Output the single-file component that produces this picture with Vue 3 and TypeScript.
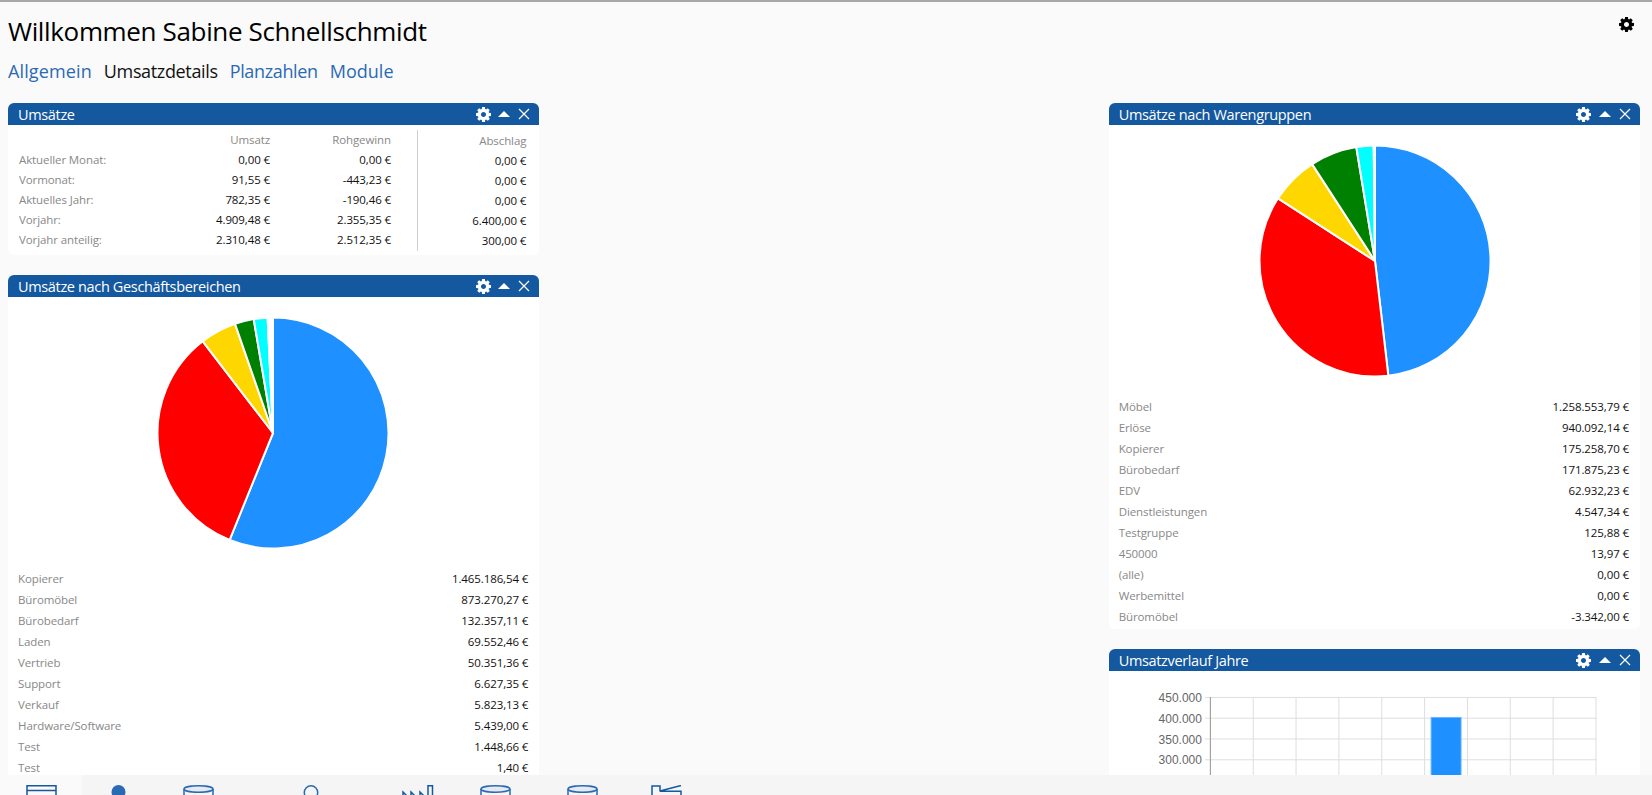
<script setup lang="ts">
interface Row { label: string; value: string }
const COLORS = ['#1e90ff', '#ff0000', '#ffd700', '#008000', '#00ffff']
const R = 115.5

function num(v: string): number {
  return parseFloat(v.replace(/[^\d,-]/g, '').replace(',', '.'))
}
function slices(rows: Row[]) {
  const vals = rows.map(r => Math.max(0, num(r.value)))
  const total = vals.reduce((a, b) => a + b, 0)
  let a = 0
  return vals.map((v, i) => {
    const from = a
    a += (v / total) * Math.PI * 2
    const large = a - from > Math.PI ? 1 : 0
    const p = (t: number) => `${(R * Math.sin(t)).toFixed(2)} ${(-R * Math.cos(t)).toFixed(2)}`
    return { d: `M0 0L${p(from)}A${R} ${R} 0 ${large} 1 ${p(a)}Z`, color: COLORS[i] ?? '#ffffff' }
  })
}
const bereiche: Row[] = [
  { label: 'Kopierer', value: '1.465.186,54 €' },
  { label: 'Büromöbel', value: '873.270,27 €' },
  { label: 'Bürobedarf', value: '132.357,11 €' },
  { label: 'Laden', value: '69.552,46 €' },
  { label: 'Vertrieb', value: '50.351,36 €' },
  { label: 'Support', value: '6.627,35 €' },
  { label: 'Verkauf', value: '5.823,13 €' },
  { label: 'Hardware/Software', value: '5.439,00 €' },
  { label: 'Test', value: '1.448,66 €' },
  { label: 'Test', value: '1,40 €' },
]
const gruppen: Row[] = [
  { label: 'Möbel', value: '1.258.553,79 €' },
  { label: 'Erlöse', value: '940.092,14 €' },
  { label: 'Kopierer', value: '175.258,70 €' },
  { label: 'Bürobedarf', value: '171.875,23 €' },
  { label: 'EDV', value: '62.932,23 €' },
  { label: 'Dienstleistungen', value: '4.547,34 €' },
  { label: 'Testgruppe', value: '125,88 €' },
  { label: '450000', value: '13,97 €' },
  { label: '(alle)', value: '0,00 €' },
  { label: 'Werbemittel', value: '0,00 €' },
  { label: 'Büromöbel', value: '-3.342,00 €' },
]
const summary = [
  ['Aktueller Monat:', '0,00 €', '0,00 €', '0,00 €'],
  ['Vormonat:', '91,55 €', '-443,23 €', '0,00 €'],
  ['Aktuelles Jahr:', '782,35 €', '-190,46 €', '0,00 €'],
  ['Vorjahr:', '4.909,48 €', '2.355,35 €', '6.400,00 €'],
  ['Vorjahr anteilig:', '2.310,48 €', '2.512,35 €', '300,00 €'],
]
const yLabels = ['450.000', '400.000', '350.000', '300.000']
const COG = 'M1024 768q0-106-75-181t-181-75-181 75-75 181 75 181 181 75 181-75 75-181zm512-109v222q0 12-8 23t-20 13l-185 28q-19 54-39 91 35 50 107 138 10 12 10 25t-9 23q-27 37-99 108t-94 71q-12 0-26-9l-138-108q-44 23-91 38-16 136-29 186-7 28-36 28h-222q-14 0-24.5-8.5t-11.5-21.5l-28-184q-49-16-90-37l-141 107q-10 9-25 9-14 0-25-11-126-114-165-168-7-10-7-23 0-12 8-23 15-21 51-66.5t54-70.5q-27-50-41-99l-183-27q-13-2-21-12.5t-8-23.5v-222q0-12 8-23t19-13l186-28q14-46 39-92-40-57-107-138-10-12-10-24 0-10 9-23 26-36 98.5-107.5t94.5-71.5q13 0 26 10l138 107q44-23 91-38 16-136 29-186 7-28 36-28h222q14 0 24.5 8.5t11.5 21.5l28 184q49 16 90 37l142-107q9-9 24-9 13 0 25 10 129 119 165 170 7 8 7 22 0 12-8 23-15 21-51 66.5t-54 70.5q26 50 41 98l183 28q13 2 21 12.5t8 23.5z'
</script>

<template>
  <div class="page">
    <main class="main">
      <div class="top">
        <h1 class="title">Willkommen Sabine Schnellschmidt</h1>
        <svg class="cog-top" viewBox="0 0 1536 1536"><path :d="COG" /></svg>
      </div>
      <nav class="nav">
        <a class="link wide">Allgemein</a>
        <a class="link active">Umsatzdetails</a>
        <a class="link">Planzahlen</a>
        <a class="link mod">Module</a>
      </nav>
      <div class="columns">
        <div class="col">
          <section class="panel">
            <header class="head">
              <span class="head-title">Umsätze</span>
              <svg class="cog" viewBox="0 0 1536 1536"><path :d="COG" /></svg>
              <svg class="up" viewBox="0 0 12 6"><path d="M6 0l6 6H0z" /></svg>
              <svg class="x" viewBox="0 0 12 12"><path d="M1 1l10 10M11 1L1 11" /></svg>
            </header>
            <div class="summary">
              <div class="sum-main">
                <div class="sum-row sum-head"><span></span><span>Umsatz</span><span>Rohgewinn</span></div>
                <div v-for="r in summary" :key="r[0]" class="sum-row">
                  <span class="lbl">{{ r[0] }}</span><span>{{ r[1] }}</span><span>{{ r[2] }}</span>
                </div>
              </div>
              <div class="sum-side">
                <div class="side-cell sum-head">Abschlag</div>
                <div v-for="r in summary" :key="r[0]" class="side-cell">{{ r[3] }}</div>
              </div>
            </div>
          </section>
          <section class="panel">
            <header class="head">
              <span class="head-title">Umsätze nach Geschäftsbereichen</span>
              <svg class="cog" viewBox="0 0 1536 1536"><path :d="COG" /></svg>
              <svg class="up" viewBox="0 0 12 6"><path d="M6 0l6 6H0z" /></svg>
              <svg class="x" viewBox="0 0 12 12"><path d="M1 1l10 10M11 1L1 11" /></svg>
            </header>
            <div class="pie-wrap pie-left">
              <svg class="pie" viewBox="-117 -117 234 234">
                <path v-for="(s, i) in slices(bereiche)" :key="i" :d="s.d" :fill="s.color" stroke="#fff" stroke-width="2" stroke-linejoin="round" />
              </svg>
            </div>
            <div class="list">
              <div v-for="(r, i) in bereiche" :key="i" class="list-row"><span class="lbl">{{ r.label }}</span><span>{{ r.value }}</span></div>
            </div>
          </section>
        </div>
        <div class="col"></div>
        <div class="col">
          <section class="panel">
            <header class="head">
              <span class="head-title">Umsätze nach Warengruppen</span>
              <svg class="cog" viewBox="0 0 1536 1536"><path :d="COG" /></svg>
              <svg class="up" viewBox="0 0 12 6"><path d="M6 0l6 6H0z" /></svg>
              <svg class="x" viewBox="0 0 12 12"><path d="M1 1l10 10M11 1L1 11" /></svg>
            </header>
            <div class="pie-wrap pie-right">
              <svg class="pie" viewBox="-117 -117 234 234">
                <path v-for="(s, i) in slices(gruppen)" :key="i" :d="s.d" :fill="s.color" stroke="#fff" stroke-width="2" stroke-linejoin="round" />
              </svg>
            </div>
            <div class="list list-tall">
              <div v-for="(r, i) in gruppen" :key="i" class="list-row"><span class="lbl">{{ r.label }}</span><span>{{ r.value }}</span></div>
            </div>
          </section>
          <section class="panel">
            <header class="head">
              <span class="head-title">Umsatzverlauf Jahre</span>
              <svg class="cog" viewBox="0 0 1536 1536"><path :d="COG" /></svg>
              <svg class="up" viewBox="0 0 12 6"><path d="M6 0l6 6H0z" /></svg>
              <svg class="x" viewBox="0 0 12 12"><path d="M1 1l10 10M11 1L1 11" /></svg>
            </header>
            <div class="chart">
              <svg class="chart-svg" viewBox="0 0 532 300">
                <g class="grid">
                  <path v-for="i in 10" :key="'v' + i" :d="`M${101.5 + (i - 1) * 42.9} 26V300`" />
                  <path v-for="i in 5" :key="'h' + i" :d="`M96 ${26.5 + (i - 1) * 20.8}H488`" />
                </g>
                <path class="axis" d="M101.5 26V300" />
                <rect x="322.5" y="46.5" width="30" height="260" fill="#1e90ff" stroke="#6cb6ff" />
                <text v-for="(t, i) in yLabels" :key="t" class="tick" x="93" :y="31 + i * 20.8" text-anchor="end">{{ t }}</text>
              </svg>
            </div>
          </section>
        </div>
      </div>
    </main>
    <footer class="bar">
      <div class="tab tab-active t1">
        <svg width="31" height="20" viewBox="0 0 31 20"><path class="ico dark" d="M1 20V.75h29V20M1 5.5h29" /></svg>
      </div>
      <div class="tab t2">
        <svg width="15" height="20" viewBox="0 0 15 20"><circle cx="7.5" cy="7" r="7" fill="#2a6ab5" /></svg>
      </div>
      <div class="tab t3">
        <svg width="31" height="20" viewBox="0 0 31 20"><ellipse class="ico cyl" cx="15.500" cy="4" rx="14.500" ry="3.200" /><path class="ico" d="M1 4v16M30 4v16" /></svg>
      </div>
      <div class="tab t4">
        <svg width="16" height="20" viewBox="0 0 16 20"><circle class="ico" cx="8" cy="7.500" r="6.700" /></svg>
      </div>
      <div class="tab t5">
        <svg width="32" height="20" viewBox="0 0 32 20"><path class="ico dark" d="M1 14V7l3.500 3.500M9 14V7l3.500 3.500M18 14V7l3.500 3.500M26 20V.75h4.500V20" /></svg>
      </div>
      <div class="tab t6">
        <svg width="31" height="20" viewBox="0 0 31 20"><ellipse class="ico cyl" cx="15.500" cy="4" rx="14.500" ry="3.200" /><path class="ico" d="M1 4v16M30 4v16" /></svg>
      </div>
      <div class="tab t7">
        <svg width="31" height="20" viewBox="0 0 31 20"><ellipse class="ico cyl" cx="15.500" cy="4" rx="14.500" ry="3.200" /><path class="ico" d="M1 4v16M30 4v16" /></svg>
      </div>
      <div class="tab t8">
        <svg width="31" height="20" viewBox="0 0 31 20"><path class="ico dark" d="M1 20V1h8v5.500M9 6L30 .5M9 6.250h21V20" /></svg>
      </div>
    </footer>
  </div>
</template>

<style scoped>
.page {
  height: 795px;
  display: flex;
  flex-direction: column;
  overflow: hidden;
  background: #fafafa;
  border-top: 2px solid #a8a8a8;
  box-sizing: border-box;
  font-family: "Open Sans", "Noto Sans", sans-serif;
}
.main { flex: 1; min-height: 0; overflow: hidden; padding: 0 12px 0 8px; }
.top { display: flex; justify-content: space-between; align-items: flex-start; height: 50px; }
.title { margin: 13px 0 0; font-size: 26px; line-height: 32px; font-weight: 400; color: #000; letter-spacing: -0.35px; }
.cog-top { width: 15px; height: 15px; margin: 15px 6px 0 0; fill: #000; }
.nav { display: flex; gap: 12px; height: 51px; font-size: 18px; line-height: 28px; padding-top: 5px; box-sizing: border-box; letter-spacing: -0.35px; }
.link { color: #2a6ab5; }
.wide { letter-spacing: 0.12px; }
.mod { letter-spacing: 0; }
.active { color: #111; }
.columns { display: grid; grid-template-columns: repeat(3, 1fr); column-gap: 19px; }
.col { display: flex; flex-direction: column; gap: 20px; min-width: 0; }
.panel { background: #fff; border-radius: 6px; }
.head { display: flex; align-items: center; height: 22px; background: #14589f; color: #fff; border-radius: 6px 6px 0 0; padding: 0 9px 0 10px; }
.head-title { flex: 1; font-size: 14.500px; letter-spacing: -0.35px; }
.cog { width: 15px; height: 15px; fill: #fff; }
.up { width: 12px; height: 6px; fill: #fff; margin: 0 8px 1px 7.500px; }
.x { width: 12px; height: 12px; fill: none; stroke: #fff; stroke-width: 1.2; }
.summary { display: flex; padding: 5px 13px 4px 11px; font-size: 11.500px; color: #111; letter-spacing: -0.1px; }
.sum-main { width: 399px; border-right: 1px solid #d0d0d0; padding-right: 26px; box-sizing: border-box; }
.sum-row { display: grid; grid-template-columns: 1fr 80px 121px; height: 20px; line-height: 20px; text-align: right; }
.sum-row .lbl { text-align: left; }
.sum-head { color: #888; }
.lbl { color: #888; }
.sum-side { flex: 1; text-align: right; padding-top: 1px; }
.side-cell { height: 20px; line-height: 20px; }
.pie-wrap { display: flex; justify-content: center; padding-top: 19px; height: 234px; }
.pie-left { padding-right: 2px; }
.pie-right { padding-left: 2px; }
.pie { width: 234px; height: 234px; display: block; }
.list { padding: 18px 11px 1px 10px; font-size: 11.500px; letter-spacing: -0.1px; color: #111; }
.list-tall { padding-bottom: 2px; }
.list-row { display: flex; justify-content: space-between; height: 21px; line-height: 21px; }
.chart { height: 300px; }
.chart-svg { width: 100%; display: block; }
.grid path { stroke: #dedede; fill: none; }
.axis { stroke: #999; fill: none; }
.tick { font-family: "Liberation Sans", sans-serif; font-size: 12px; fill: #666; }
.bar { flex: none; height: 20px; display: flex; background: #f5f5f5; overflow: hidden; }
.tab { display: flex; justify-content: center; padding-top: 10px; box-sizing: border-box; height: 30px; flex: none; }
.tab-active { background: #fafafa; }
.t1 { width: 82px; }
.t2 { width: 72px; }
.t3 { width: 89.500px; }
.t4 { width: 135px; }
.t5 { width: 79px; }
.t6 { width: 76px; }
.t7 { width: 97px; }
.t8 { width: 71px; }
.ico { fill: none; stroke: #2a6ab5; stroke-width: 1.5; }
.dark { stroke: #14589f; }
.cyl { fill: #e6e9ed; }
</style>

<style>
body { margin: 0; overflow: hidden; }
</style>
